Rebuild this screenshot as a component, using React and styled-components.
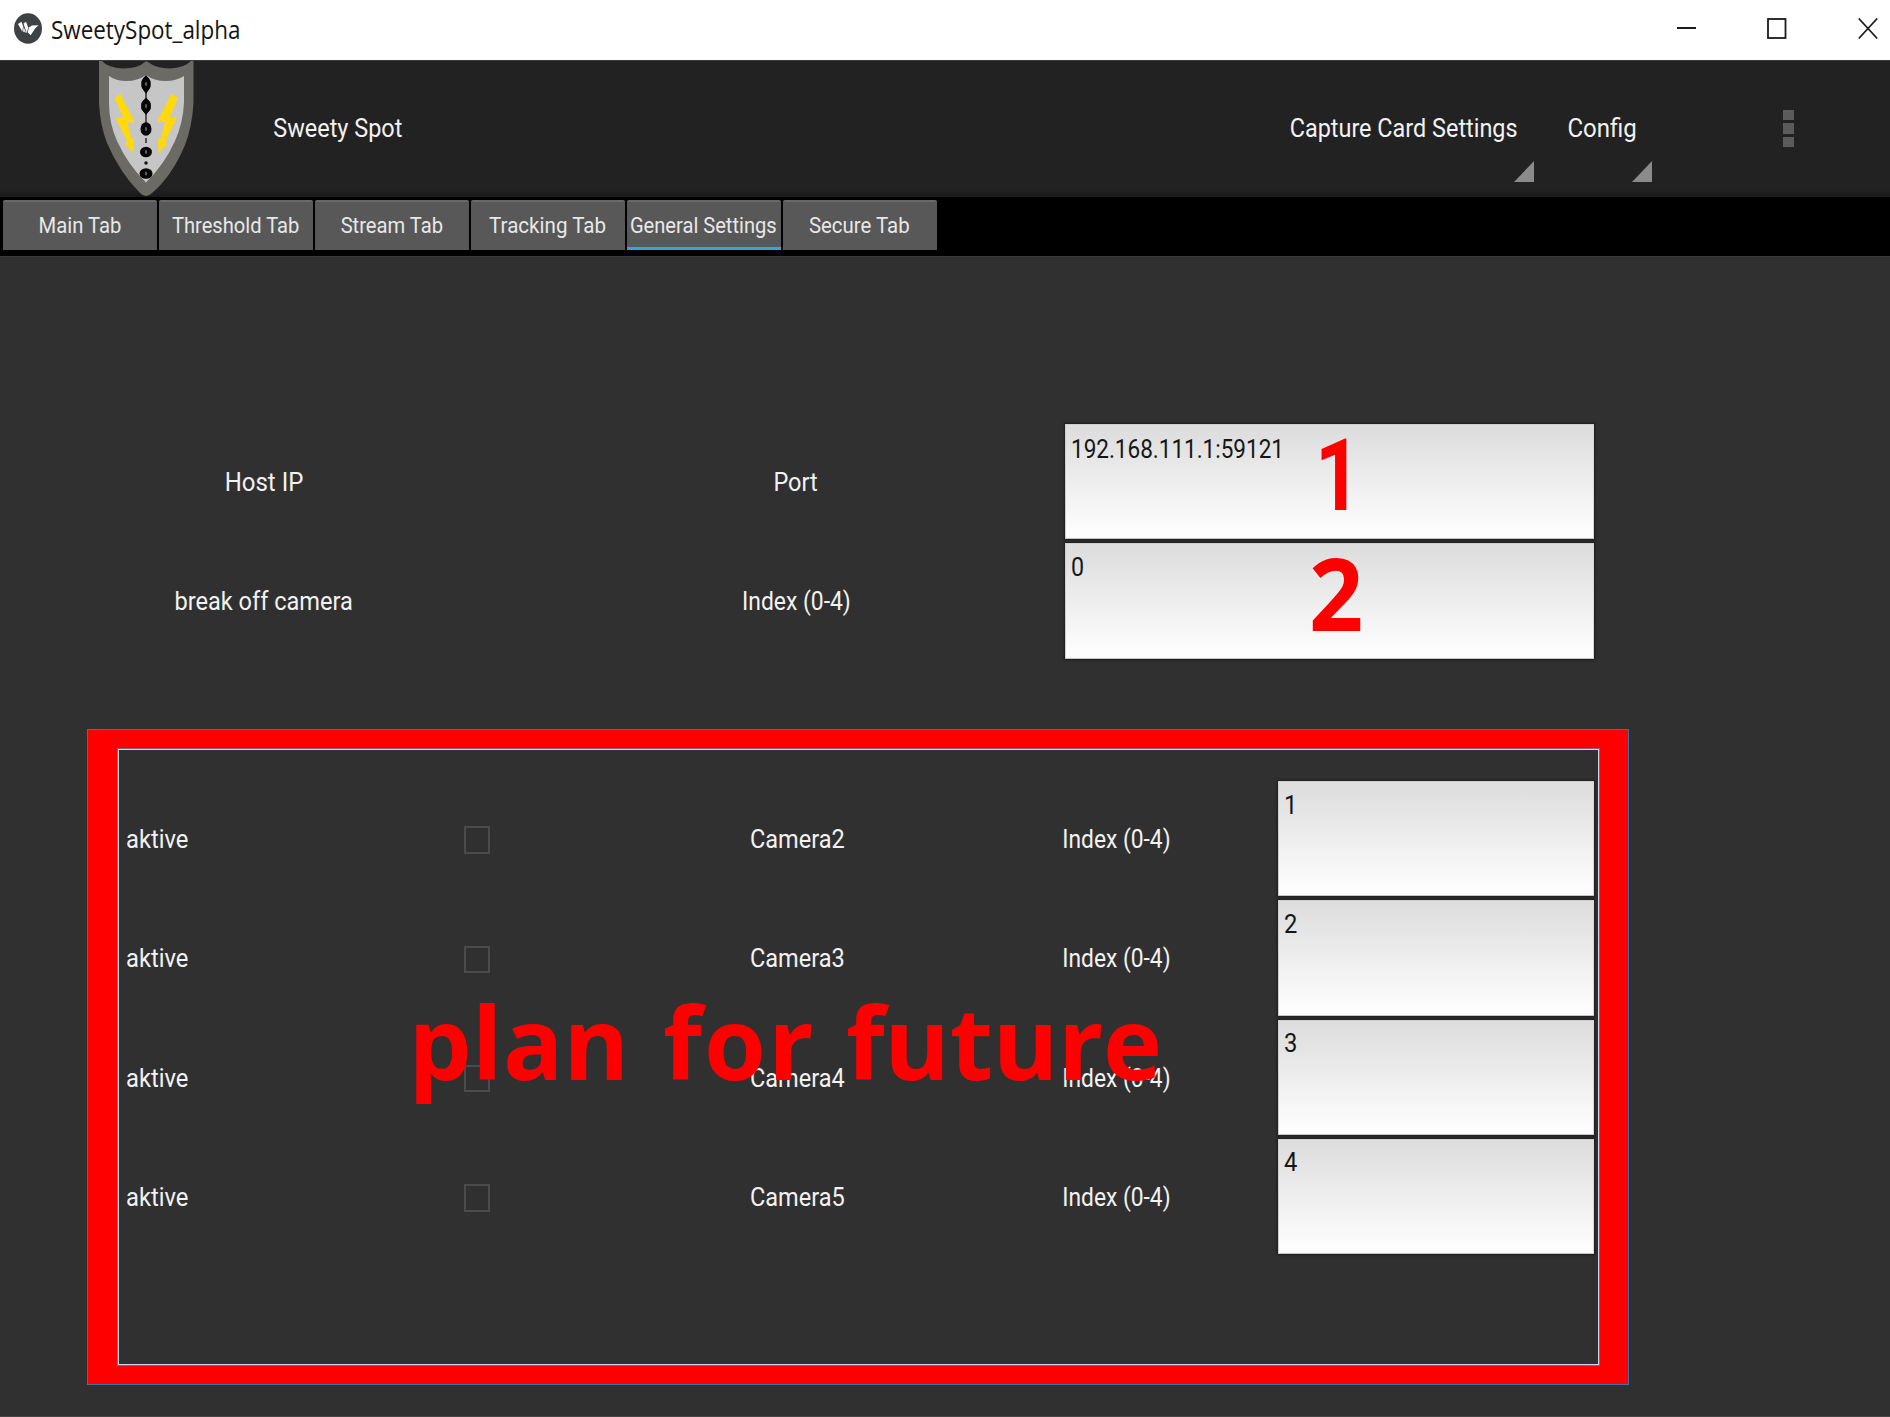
import React from "react";
import styled, { createGlobalStyle } from "styled-components";

const GlobalStyle = createGlobalStyle`
  * { box-sizing: border-box; }
  html, body { margin: 0; padding: 0; background: #303030; overflow: hidden; }
`;

const Window = styled.div`
  position: relative;
  display: flex;
  flex-direction: column;
  width: 1890px;
  height: 1417px;
  overflow: hidden;
  background: #303030;
  border-bottom: 1px solid #464646;
  font-family: Roboto, "Liberation Sans", sans-serif;
  font-size: 25px;
  line-height: 30px;
  color: #f2f2f2;
`;

const TitleBar = styled.div`
  display: flex;
  align-items: center;
  height: 60px;
  padding: 0 12px 3px 14px;
  background: #fff;
  flex: none;
`;

const WindowTitle = styled.div`
  display: flex;
  width: 188px;
  margin-left: 9px;
  font-family: "Open Sans", "Noto Sans", sans-serif;
  font-size: 25px;
  color: #151515;
`;

const WindowControls = styled.div`
  display: flex;
  align-items: center;
  gap: 71px;
  margin-left: auto;
`;

const Narrow = styled.span`
  flex: none;
  white-space: nowrap;
  transform: scaleX(${(p) => p.$scale});
  transform-origin: ${(p) => p.$origin || "center"};
`;

const ActionBar = styled.header`
  display: flex;
  align-items: center;
  height: 137px;
  flex: none;
  padding: 0 96px 0 98px;
  border-top: 1px solid #3a3a3a;
  background: linear-gradient(#222 0 94%, #191919 100%);
`;

const AppTitle = styled.div`
  display: flex;
  justify-content: center;
  width: 130px;
  margin-left: 79px;
`;

const MenuButton = styled.div`
  display: flex;
  flex-direction: column;
  align-items: flex-end;
  align-self: stretch;
  width: ${(p) => p.$width}px;
  margin-left: ${(p) => p.$gap};
  padding-top: 53px;
`;

const MenuLabel = styled.div`
  display: flex;
  justify-content: center;
  width: ${(p) => p.$width}px;
  margin-right: 16.5px;
`;

const Corner = styled.div`
  width: 20px;
  height: 21px;
  margin-top: 17px;
  background: #8b8b8b;
  clip-path: polygon(100% 0, 100% 100%, 0 100%);
`;

const Overflow = styled.div`
  display: flex;
  flex-direction: column;
  gap: 3px;
  margin-left: 131px;
  margin-bottom: 1px;
`;

const Dot = styled.i`
  width: 11px;
  height: 10.5px;
  background: #5b5b5b;
`;

const TabStrip = styled.nav`
  display: flex;
  gap: 2.6px;
  height: 59px;
  flex: none;
  padding: 3px 0 0 3.3px;
  background: #000;
`;

const Tab = styled.div`
  display: flex;
  align-items: center;
  justify-content: center;
  width: 153.4px;
  height: 49.5px;
  padding: ${(p) => (p.$active ? 3 : 0)}px 1px 0 0;
  border-top: 2px solid #686868;
  border-bottom: ${(p) => (p.$active ? "3px solid #33a5d6" : "0")};
  border-radius: 2px 2px 0 0;
  background: #585858;
  font-size: 22px;
  line-height: 28px;
  color: #e8e8e8;
`;

const Content = styled.main`
  display: flex;
  flex-direction: column;
  flex: 1;
  padding-top: 165px;
  border-top: 1px solid #383838;
`;

const HostGrid = styled.section`
  display: grid;
  grid-template-columns: 527px 538px 531px;
  grid-auto-rows: 119.3px;
`;

const CameraGrid = styled.section`
  display: grid;
  grid-template-columns: 319px 319px 319px 319px 320px;
  grid-auto-rows: 119.25px;
  margin-top: 118.5px;
`;

const Cell = styled.div`
  display: flex;
  align-items: center;
  justify-content: ${(p) => (p.$start ? "flex-start" : "center")};
  padding-top: 2.6px;
  padding-left: ${(p) => (p.$start ? 126 : 0)}px;
`;

const Field = styled.div`
  display: flex;
  margin: 2px 2.5px 2px ${(p) => p.$inset}px;
  padding: ${(p) => p.$top}px 0 0 5px;
  border: 1px solid;
  border-color: #cfcfcf #d8d8d8 #c4c4c4 #cfcfcf;
  background: linear-gradient(#dedede 6%, #fdfdfd 94%);
  box-shadow: 0 0 2px 1px #1c1c1c;
  color: #161616;
`;

const CheckBox = styled.div`
  width: 25.5px;
  height: 27.5px;
  margin-right: 3px;
  border: 2px solid #4b4b4b;
`;

const FutureFrame = styled.div`
  position: absolute;
  left: 87px;
  top: 729px;
  width: 1542px;
  height: 656px;
  border: 1px solid #3f71a4;
`;

const FutureBand = styled.div`
  height: 100%;
  border: solid #f00;
  border-width: 18px 28px 18px 29px;
`;

const FutureEdge = styled.div`
  height: 100%;
  border: 1px solid #85607f;
  box-shadow: inset 0 0 0 1px #c3dcec;
`;

const Note = styled.div`
  position: absolute;
  left: ${(p) => p.$x}px;
  top: ${(p) => p.$y}px;
  font: ${(p) => p.$weight || 700} 100px/120px ${(p) => p.$face || '"Open Sans"'}, "Noto Sans", sans-serif;
  white-space: pre;
  color: #f00;
  transform: scaleX(${(p) => p.$scale || 1});
  transform-origin: left;
`;

const Word = styled.span`
  display: inline-block;
  width: ${(p) => p.$width}px;
  letter-spacing: ${(p) => p.$spacing}px;
`;

const KivyIcon = () => (
  <svg width="28" height="31" viewBox="0 0 28 31">
    <ellipse cx="14" cy="15.5" rx="14" ry="15.2" fill="#3f4245" />
    <path d="M4 11 L7.500 8.800 L9.200 13.500 L8.200 18.600 Z" fill="#fff" />
    <path d="M9.500 10.500 L12 8.800 L14.200 14.500 L12.800 20.300 Z" fill="#fff" />
    <path d="M14.800 14.500 L17.800 12.500 L24.500 12.200 L21.500 15 L16.600 22.300 L13.800 19.500 Z" fill="#fff" />
    <path d="M9.600 14 L12.300 19.800 L8.700 18.500 Z" fill="#dcdcdc" />
  </svg>
);

const Bead = ({ cy, rx, ry }) => (
  <>
    <ellipse cx="48" cy={cy} rx={rx} ry={ry} fill="#050505" />
    <ellipse cx="48" cy={cy} rx="1.2" ry="2" fill="#5a5a5a" />
  </>
);

const Shield = () => (
  <svg width="96" height="136" viewBox="0 0 96 136">
    <path
      d="M1 0 H4 Q10 7 25 7.500 Q40 7.500 47 1 L48 0 L50 1 Q58 7.500 72 7.500 Q86 7 93 0 H95.500 V42 Q94 66 87 84 Q74 115 54 132 Q48 138 42 132 Q22 112 9 82 Q2 64 1 42 Z"
      fill="#6b6a65"
    />
    <path
      d="M11 15 Q18 20 28 20 Q40 20 48 14 Q56 20 68 20 Q78 20 86 15 V42 Q85 62 77 80 Q66 104 48 121.500 Q30 104 19 80 Q11 62 11 42 Z"
      fill="#c6c6c6"
    />
    <path d="M48 16 V74 M48 77 V82" stroke="#222" strokeWidth="1.4" />
    <path d="M48 14 L52.500 20 V26 L48 33 L43.500 26 V20 Z" fill="#050505" />
    <Bead cy={23} rx={4.500} ry={7.500} />
    <path d="M48 36.500 L52.600 42 V48 L48 54 L43.400 48 V42 Z" fill="#050505" />
    <Bead cy={45} rx={4.800} ry={6.800} />
    <Bead cy={68} rx={5.500} ry={6.800} />
    <Bead cy={91} rx={6} ry={5.300} />
    <Bead cy={112.500} rx={6.500} ry={5.300} />
    <circle cx="48" cy="102" r="1.700" fill="#111" />
    <path d="M16.500 37 L22.500 33 L36.800 61.500 L29.500 61 L33.500 78.500 L36 77.500 L35.500 92 L26.500 82.500 L29.500 81 L17.500 56.500 L25.500 56.500 Z" fill="#ffd90a" />
    <path d="M80 37 L73.500 33 L59 61 L67 61 L62.500 78.500 L60 77.500 L60.500 92 L69.500 82.500 L67 81 L79 56.500 L71.500 56.500 Z" fill="#ffd90a" />
  </svg>
);

const tabs = [
  { label: "Main Tab", scale: 0.92 },
  { label: "Threshold Tab", scale: 0.915 },
  { label: "Stream Tab", scale: 0.917 },
  { label: "Tracking Tab", scale: 0.935 },
  { label: "General Settings", scale: 0.914, active: true },
  { label: "Secure Tab", scale: 0.928 },
];

const hosts = [
  { name: "Host IP", nameScale: 0.96, kind: "Port", kindScale: 0.94, value: "192.168.111.1:59121", valueScale: 0.9, top: 10 },
  { name: "break off camera", nameScale: 0.943, kind: "Index (0-4)", kindScale: 0.915, value: "0", valueScale: 0.93, top: 8.500 },
];

const cameras = [
  { name: "Camera2", value: "1" },
  { name: "Camera3", value: "2" },
  { name: "Camera4", value: "3" },
  { name: "Camera5", value: "4" },
];

export default function App() {
  return (
    <Window>
      <GlobalStyle />
      <TitleBar>
        <KivyIcon />
        <WindowTitle>
          <Narrow $scale={0.897} $origin="left">SweetySpot_alpha</Narrow>
        </WindowTitle>
        <WindowControls>
          <svg width="19" height="22" viewBox="0 0 19 22">
            <path d="M0 10 H19" stroke="#1a1a1a" strokeWidth="2" />
          </svg>
          <svg width="20" height="22" viewBox="0 0 20 22">
            <rect x="1" y="1" width="17.500" height="19" fill="none" stroke="#1a1a1a" strokeWidth="1.8" />
          </svg>
          <svg width="20" height="22" viewBox="0 0 20 22">
            <path d="M0.800 0.500 L19.200 20.500 M19.200 0.500 L0.800 20.500" stroke="#1a1a1a" strokeWidth="1.7" />
          </svg>
        </WindowControls>
      </TitleBar>

      <ActionBar>
        <Shield />
        <AppTitle>
          <Narrow $scale={0.938}>Sweety Spot</Narrow>
        </AppTitle>
        <MenuButton $width={244} $gap="auto">
          <MenuLabel $width={227}>
            <Narrow $scale={0.937}>Capture Card Settings</Narrow>
          </MenuLabel>
          <Corner />
        </MenuButton>
        <MenuButton $width={84} $gap="34px">
          <MenuLabel $width={67}>
            <Narrow $scale={0.96}>Config</Narrow>
          </MenuLabel>
          <Corner />
        </MenuButton>
        <Overflow>
          <Dot />
          <Dot />
          <Dot />
        </Overflow>
      </ActionBar>

      <TabStrip>
        {tabs.map((t) => (
          <Tab key={t.label} $active={t.active}>
            <Narrow $scale={t.scale}>{t.label}</Narrow>
          </Tab>
        ))}
      </TabStrip>

      <Content>
        <HostGrid>
          {hosts.map((h) => (
            <React.Fragment key={h.name}>
              <Cell><Narrow $scale={h.nameScale}>{h.name}</Narrow></Cell>
              <Cell><Narrow $scale={h.kindScale}>{h.kind}</Narrow></Cell>
              <Field $top={h.top} $inset={0}>
                <Narrow $scale={h.valueScale} $origin="left">{h.value}</Narrow>
              </Field>
            </React.Fragment>
          ))}
        </HostGrid>
        <CameraGrid>
          {cameras.map((c) => (
            <React.Fragment key={c.name}>
              <Cell $start><Narrow $scale={0.95} $origin="left">aktive</Narrow></Cell>
              <Cell><CheckBox /></Cell>
              <Cell><Narrow $scale={0.942}>{c.name}</Narrow></Cell>
              <Cell><Narrow $scale={0.912}>Index (0-4)</Narrow></Cell>
              <Field $top={8.500} $inset={2}>
                <Narrow $scale={0.95} $origin="left">{c.value}</Narrow>
              </Field>
            </React.Fragment>
          ))}
        </CameraGrid>
      </Content>

      <FutureFrame>
        <FutureBand>
          <FutureEdge />
        </FutureBand>
      </FutureFrame>
      <Note $x={1315} $y={416} $face="Roboto" $weight={700} $scale={0.8}>1</Note>
      <Note $x={1309} $y={532} $scale={0.95}>2</Note>
      <Note $x={408.500} $y={981}>
        <Word $width={254.500} $spacing={0.3}>plan </Word>
        <Word $width={183} $spacing={2.3}>for </Word>
        <Word $width={320} $spacing={-0.4}>future</Word>
      </Note>
    </Window>
  );
}
